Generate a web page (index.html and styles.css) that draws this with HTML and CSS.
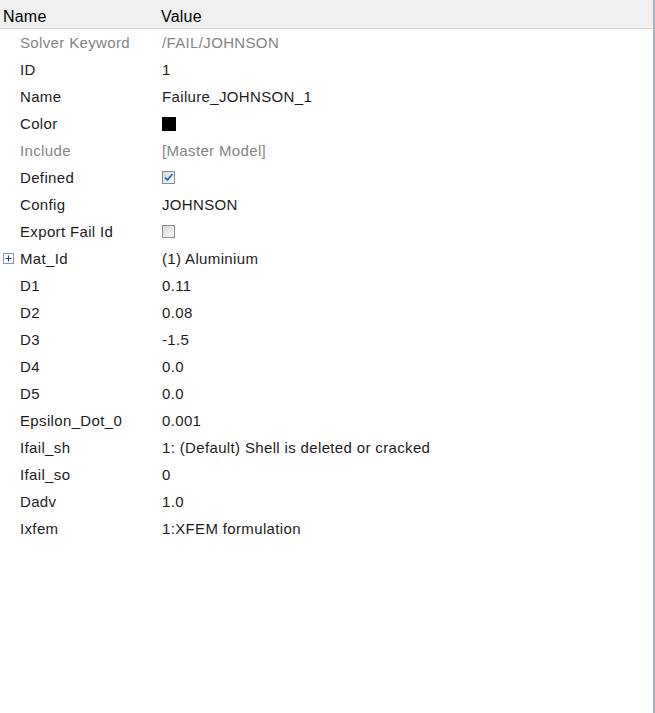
FILE: index.html
```html
<!DOCTYPE html>
<html lang="en">

<head>
    <meta charset="UTF-8">
    <title>Properties</title>
    <link rel="stylesheet" href="styles.css">
</head>

<body>
    <div class="panel">
        <div class="head">
            <div class="col-name">Name</div>
            <div class="col-value">Value</div>
        </div>
        <div class="rows">
            <div class="row muted"><div class="key">Solver Keyword</div><div class="val">/FAIL/JOHNSON</div></div>
            <div class="row"><div class="key">ID</div><div class="val">1</div></div>
            <div class="row"><div class="key">Name</div><div class="val">Failure_JOHNSON_1</div></div>
            <div class="row"><div class="key">Color</div><div class="val"><span class="swatch"></span></div></div>
            <div class="row muted"><div class="key">Include</div><div class="val">[Master Model]</div></div>
            <div class="row"><div class="key">Defined</div><div class="val"><span class="check on">
                <svg width="11" height="11" viewBox="0 0 11 11"><path d="M2 5.5 L4.5 8 L9.5 2" fill="none" stroke="#1f6fc0" stroke-width="1.8"/></svg>
            </span></div></div>
            <div class="row"><div class="key">Config</div><div class="val">JOHNSON</div></div>
            <div class="row"><div class="key">Export Fail Id</div><div class="val"><span class="check"></span></div></div>
            <div class="row"><div class="key"><span class="expand">
                <svg width="11" height="11" viewBox="0 0 11 11"><rect x="0.5" y="0.5" width="10" height="10" fill="#fff" stroke="#8a9bb0"/><path d="M2.5 5.5 H8.5 M5.5 2.5 V8.5" stroke="#1e3f9c" stroke-width="1"/></svg>
            </span>Mat_Id</div><div class="val">(1) Aluminium</div></div>
            <div class="row"><div class="key">D1</div><div class="val">0.11</div></div>
            <div class="row"><div class="key">D2</div><div class="val">0.08</div></div>
            <div class="row"><div class="key">D3</div><div class="val">-1.5</div></div>
            <div class="row"><div class="key">D4</div><div class="val">0.0</div></div>
            <div class="row"><div class="key">D5</div><div class="val">0.0</div></div>
            <div class="row"><div class="key">Epsilon_Dot_0</div><div class="val">0.001</div></div>
            <div class="row"><div class="key">Ifail_sh</div><div class="val">1: (Default) Shell is deleted or cracked</div></div>
            <div class="row"><div class="key">Ifail_so</div><div class="val">0</div></div>
            <div class="row"><div class="key">Dadv</div><div class="val">1.0</div></div>
            <div class="row"><div class="key">Ixfem</div><div class="val">1:XFEM formulation</div></div>
        </div>
    </div>
</body>

</html>
```
FILE: styles.css
```css
html,
body {
    margin: 0;
    padding: 0;
    height: 100%;
}

body {
    font-family: "Liberation Sans", Arial, sans-serif;
    font-size: 15px;
    letter-spacing: 0.35px;
    color: #1c1c1c;
    background: #fff;
}

.panel {
    height: 100%;
    box-sizing: border-box;
    border-right: 2px solid #a9b4bd;
}

.head {
    display: grid;
    grid-template-columns: 158px 1fr;
    height: 29px;
    box-sizing: border-box;
    padding-top: 6px;
    align-items: center;
    background: #f0f0f0;
    border-bottom: 1px solid #d2d6da;
    font-size: 16px;
    letter-spacing: 0.2px;
    color: #000;
}

.col-name {
    padding-left: 3px;
}

.col-value {
    padding-left: 3px;
}

.row {
    display: grid;
    grid-template-columns: 161px 1fr;
    height: 27px;
    align-items: center;
}

.key {
    padding-left: 20px;
    display: flex;
    align-items: center;
    position: relative;
}

.val {
    padding-left: 1px;
    display: flex;
    align-items: center;
}

.muted {
    color: #848484;
}

.swatch {
    display: inline-block;
    width: 14px;
    height: 14px;
    background: #000;
}

.check {
    display: inline-flex;
    align-items: center;
    justify-content: center;
    width: 11px;
    height: 11px;
    border: 1px solid #8d8d8d;
    background: linear-gradient(135deg, #d6d8dc, #fafafa);
}

.expand {
    position: absolute;
    left: 3px;
    top: 50%;
    margin-top: -6px;
    display: flex;
}
```
